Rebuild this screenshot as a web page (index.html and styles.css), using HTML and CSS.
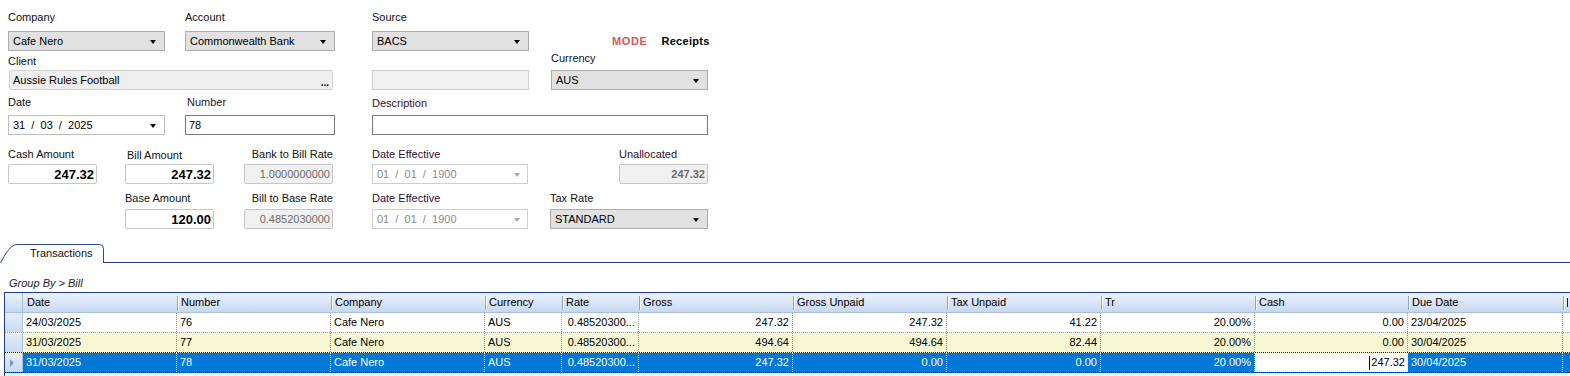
FILE: index.html
```html
<!DOCTYPE html>
<html>
<head>
<meta charset="utf-8">
<link rel="stylesheet" href="styles.css">
</head>
<body>
<div class="top">
  <div class="f c1 r1 g7"><div class="lbl">Company</div><div class="cb"><span>Cafe Nero</span><span class="arrow"></span></div></div>
  <div class="f c3 r1 g7"><div class="lbl">Account</div><div class="cb"><span>Commonwealth Bank</span><span class="arrow"></span></div></div>
  <div class="f c5 r1 g7"><div class="lbl">Source</div><div class="cb"><span>BACS</span><span class="arrow"></span></div></div>
  <div class="mode c7 r1"><span class="mode-k">MODE</span><span class="mode-v">Receipts</span></div>

  <div class="f span12 r2 g2"><div class="lbl">Client</div><div class="client"><span>Aussie Rules Football</span><span class="dots">...</span></div></div>
  <div class="f c5 r2"><div class="blank"></div></div>
  <div class="f c7 r2 g5"><div class="lbl">Currency</div><div class="cb"><span>AUS</span><span class="arrow"></span></div></div>

  <div class="f c1 r3 g6"><div class="lbl">Date</div><div class="dp"><span>31&nbsp; /&nbsp; 03&nbsp; /&nbsp; 2025</span><span class="arrow"></span></div></div>
  <div class="f c3 r3 g6"><div class="lbl p pl2">Number</div><div class="tb">78</div></div>
  <div class="f span34 r3 g5"><div class="lbl p">Description</div><div class="tb"></div></div>
</div>

<div class="bot">
  <div class="f c1 r1 g3"><div class="lbl">Cash Amount</div><div class="amt">247.32</div></div>
  <div class="f c3 r1 g2"><div class="lbl pl2">Bill Amount</div><div class="amt">247.32</div></div>
  <div class="f c5 r1 g3"><div class="lbl ra">Bank to Bill Rate</div><div class="rate">1.0000000000</div></div>
  <div class="f c7 r1 g3"><div class="lbl p">Date Effective</div><div class="dp off"><span>01&nbsp; /&nbsp; 01&nbsp; /&nbsp; 1900</span><span class="arrow"></span></div></div>
  <div class="f c9 r1 g3 unal"><div class="lbl p">Unallocated</div><div class="rate bold">247.32</div></div>

  <div class="f c3 r2 g4"><div class="lbl">Base Amount</div><div class="amt">120.00</div></div>
  <div class="f c5 r2 g4"><div class="lbl ra">Bill to Base Rate</div><div class="rate">0.4852030000</div></div>
  <div class="f c7 r2 g4"><div class="lbl p">Date Effective</div><div class="dp off"><span>01&nbsp; /&nbsp; 01&nbsp; /&nbsp; 1900</span><span class="arrow"></span></div></div>
  <div class="f c9 r2 g4"><div class="lbl">Tax Rate</div><div class="cb"><span>STANDARD</span><span class="arrow"></span></div></div>
</div>

<div class="tabs">
  <div class="tab">
    <svg class="tab-shape" width="105" height="19" viewBox="0 0 105 19"><path d="M0.5 19 C3 14 8 5 12 2.5 Q14 0.5 17 0.5 L99.5 0.5 Q103.5 0.5 103.5 4.5 L103.5 19" fill="#fff" stroke="#2b4a9e" stroke-width="1"/></svg>
    <span class="tab-text">Transactions</span>
  </div>
  <div class="tabfill"></div>
</div>

<div class="groupby">Group By &gt; Bill</div>

<div class="grid">
  <div class="hrow">
    <div class="hsel"></div>
    <div class="h w154">Date</div>
    <div class="h w154">Number</div>
    <div class="h w154">Company</div>
    <div class="h w77">Currency</div>
    <div class="h w77">Rate</div>
    <div class="h w154">Gross</div>
    <div class="h w154">Gross Unpaid</div>
    <div class="h w154">Tax Unpaid</div>
    <div class="h w154">Tr</div>
    <div class="h w153">Cash</div>
    <div class="h w155">Due Date</div>
    <div class="h w200"><span class="stem"></span></div>
  </div>
  <div class="row">
    <div class="rsel"></div>
    <div class="cell w154">24/03/2025</div>
    <div class="cell w154">76</div>
    <div class="cell w154">Cafe Nero</div>
    <div class="cell w77">AUS</div>
    <div class="cell w77 num">0.48520300...</div>
    <div class="cell w154 num">247.32</div>
    <div class="cell w154 num">247.32</div>
    <div class="cell w154 num">41.22</div>
    <div class="cell w154 num">20.00%</div>
    <div class="cell w153 num">0.00</div>
    <div class="cell w155">23/04/2025</div>
    <div class="cell w200"></div>
  </div>
  <div class="row alt">
    <div class="rsel"></div>
    <div class="cell w154">31/03/2025</div>
    <div class="cell w154">77</div>
    <div class="cell w154">Cafe Nero</div>
    <div class="cell w77">AUS</div>
    <div class="cell w77 num">0.48520300...</div>
    <div class="cell w154 num">494.64</div>
    <div class="cell w154 num">494.64</div>
    <div class="cell w154 num">82.44</div>
    <div class="cell w154 num">20.00%</div>
    <div class="cell w153 num">0.00</div>
    <div class="cell w155">30/04/2025</div>
    <div class="cell w200"></div>
  </div>
  <div class="row selrow">
    <div class="rsel"><span class="ptr"></span></div>
    <div class="cell w154">31/03/2025</div>
    <div class="cell w154">78</div>
    <div class="cell w154">Cafe Nero</div>
    <div class="cell w77">AUS</div>
    <div class="cell w77 num">0.48520300...</div>
    <div class="cell w154 num">247.32</div>
    <div class="cell w154 num">0.00</div>
    <div class="cell w154 num">0.00</div>
    <div class="cell w154 num">20.00%</div>
    <div class="cell w153 edit"><span class="caret"></span>247.32</div>
    <div class="cell w155">30/04/2025</div>
    <div class="cell w200"></div>
  </div>
</div>
</body>
</html>
```

FILE: styles.css
```css
* { box-sizing: border-box; }
html, body { margin: 0; padding: 0; overflow: hidden; }
body {
  width: 1570px;
  height: 376px;
  background: #fff;
  font-family: "Liberation Sans", Arial, sans-serif;
  font-size: 11px;
  color: #000;
}

/* ---------- form grids ---------- */
.top {
  display: grid;
  grid-template-columns: 157px 20px 150px 37px 157px 22px 157px;
  grid-template-rows: 51px 39px 45px;
  padding-left: 8px;
}
.bot {
  display: grid;
  grid-template-columns: 89px 28px 89px 30px 89px 39px 156px 22px 158px;
  grid-template-rows: 49px 45px;
  padding-left: 8px;
}
.c1 { grid-column: 1; }
.c3 { grid-column: 3; }
.c5 { grid-column: 5; }
.c7 { grid-column: 7; }
.c9 { grid-column: 9; }
.span12 { grid-column: 1 / 4; }
.span34 { grid-column: 5 / 8; }
.r1 { grid-row: 1; }
.r2 { grid-row: 2; }
.r3 { grid-row: 3; }

.f { display: flex; flex-direction: column; align-self: end; }
.g2 { gap: 2px; }
.g3 { gap: 3px; }
.g4 { gap: 4px; }
.g5 { gap: 5px; }
.g6 { gap: 6px; }
.g7 { gap: 7px; }
.unal { justify-self: end; width: 89px; }

.lbl { height: 13px; line-height: 13px; white-space: nowrap; color: #111; }
.lbl.p { color: #301030; }
.pl2 { padding-left: 2px; }
.ra { text-align: right; }

/* combo */
.cb {
  height: 20px;
  background: #e1e1e1;
  border: 1px solid #adadad;
  display: flex;
  align-items: center;
  justify-content: space-between;
  padding: 0 8px 0 4px;
  white-space: nowrap;
}
.arrow {
  width: 0; height: 0;
  border-left: 3.5px solid transparent;
  border-right: 3.5px solid transparent;
  border-top: 4px solid #000;
  margin-top: 1px;
}

/* text box */
.tb {
  height: 20px;
  background: #fff;
  border: 1px solid #7a7a7a;
  display: flex;
  align-items: center;
  padding: 0 3px;
}
.client {
  height: 20px;
  margin: 0 2px 0 1px;
  background: #efefef;
  border: 1px solid #d2d2d2;
  border-radius: 2px;
  display: flex;
  align-items: center;
  justify-content: space-between;
  padding: 0 3px 0 3px;
}
.dots { font-weight: bold; font-size: 10px; align-self: flex-end; line-height: 12px; }
.blank {
  height: 20px;
  background: #f0f0f0;
  border: 1px solid #cfcfcf;
}

/* date picker */
.dp {
  height: 20px;
  background: #fff;
  border: 1px solid #bdbdbd;
  display: flex;
  align-items: center;
  justify-content: space-between;
  padding: 0 8px 0 4px;
  white-space: nowrap;
}
.dp.off { border-color: #cfcfcf; color: #8a8a8a; padding-right: 7px; }
.dp.off .arrow { border-top-color: #a8a8a8; }

/* amounts */
.amt {
  height: 20px;
  background: #fff;
  border: 1px solid #c6c6c6;
  border-radius: 2px;
  display: flex;
  align-items: center;
  justify-content: flex-end;
  padding-right: 2px;
  font-weight: bold;
  font-size: 13px;
}
.rate {
  height: 20px;
  background: #f0f0f0;
  border: 1px solid #c6c6c6;
  border-radius: 2px;
  display: flex;
  align-items: center;
  justify-content: flex-end;
  padding-right: 2px;
  color: #6d6d6d;
}
.rate.bold { font-weight: bold; }

/* mode */
.mode {
  align-self: end;
  height: 20px;
  display: flex;
  align-items: center;
  padding-left: 61px;
  white-space: nowrap;
  font-weight: bold;
}
.mode-k { color: #d85656; letter-spacing: 0.6px; margin-right: 14px; }
.mode-v { color: #000; letter-spacing: 0.3px; }

/* ---------- tabs ---------- */
.tabs { display: flex; margin-top: 15px; height: 19px; }
.tab { position: relative; width: 104px; height: 19px; flex: none; }
.tab-shape { position: absolute; left: 0; top: 0; }
.tab-text { position: relative; display: block; padding-left: 30px; line-height: 18px; color: #111; }
.tabfill { flex: 1; height: 19px; border-bottom: 1px solid #1e3c8e; }

.groupby {
  height: 29px;
  padding: 14px 0 0 9px;
  line-height: 13px;
  font-style: italic;
  color: #1a1a1a;
}

/* ---------- data grid ---------- */
.grid {
  margin-left: 4px;
  width: 1700px;
  height: 90px;
  border-top: 1px solid #1e3c8e;
  border-left: 1px solid #1e3c8e;
}
.hrow {
  display: flex;
  height: 20px;
  background: linear-gradient(#edf3fc, #c5d7f1);
  border-bottom: 1px solid #a9bfe2;
}
.hsel { width: 18px; flex: none; border-right: 1px solid #a9bfe2; }
.h {
  position: relative;
  flex: none;
  padding-left: 4px;
  line-height: 19px;
  white-space: nowrap;
  overflow: hidden;
}
.h::before {
  content: "";
  position: absolute;
  left: 0; top: 3px; bottom: 2px;
  width: 1px;
  background: #8aa3cf;
}
.h::after {
  content: "";
  position: absolute;
  left: 1px; top: 3px; bottom: 2px;
  width: 1px;
  background: #ffffff;
}
.hrow .h:nth-child(2)::before, .hrow .h:nth-child(2)::after { display: none; }
.stem { display: inline-block; width: 1px; height: 9px; background: #301030; margin-left: 0; vertical-align: -1px; }

.w77 { width: 77px; }
.w153 { width: 153px; }
.w154 { width: 154px; }
.w155 { width: 155px; }
.w200 { width: 200px; }

.row {
  display: flex;
  height: 20px;
  border-bottom: 1px dotted #7f97c9;
  background: #fff;
}
.row.alt { background: #f7f7d4; }
.rsel {
  width: 18px;
  flex: none;
  background: linear-gradient(#e6edf9, #c9d9f0);
  border-right: 1px solid #a9bfe2;
  display: flex;
  align-items: center;
  padding-left: 5px;
}
.cell {
  flex: none;
  border-right: 1px dotted #7f97c9;
  padding: 0 3px;
  line-height: 19px;
  white-space: nowrap;
  overflow: hidden;
}
.cell.num { text-align: right; padding-right: 3px; }
.row.selrow {
  background: #0078d7;
  color: #fff;
  border-bottom: 1px dotted #000;
}
.alt { border-bottom: 1px dotted #222 !important; }
.selrow .cell { border-right-color: #d8e6f7; }
.cell.edit {
  background: #fff;
  color: #000;
  display: flex;
  align-items: center;
  justify-content: flex-end;
  padding-right: 2px;
}
.caret { width: 1px; height: 14px; background: #000; margin-right: 1px; }
.ptr {
  width: 0; height: 0;
  border-top: 4px solid transparent;
  border-bottom: 4px solid transparent;
  border-left: 4px solid #7d97c9;
}
```
